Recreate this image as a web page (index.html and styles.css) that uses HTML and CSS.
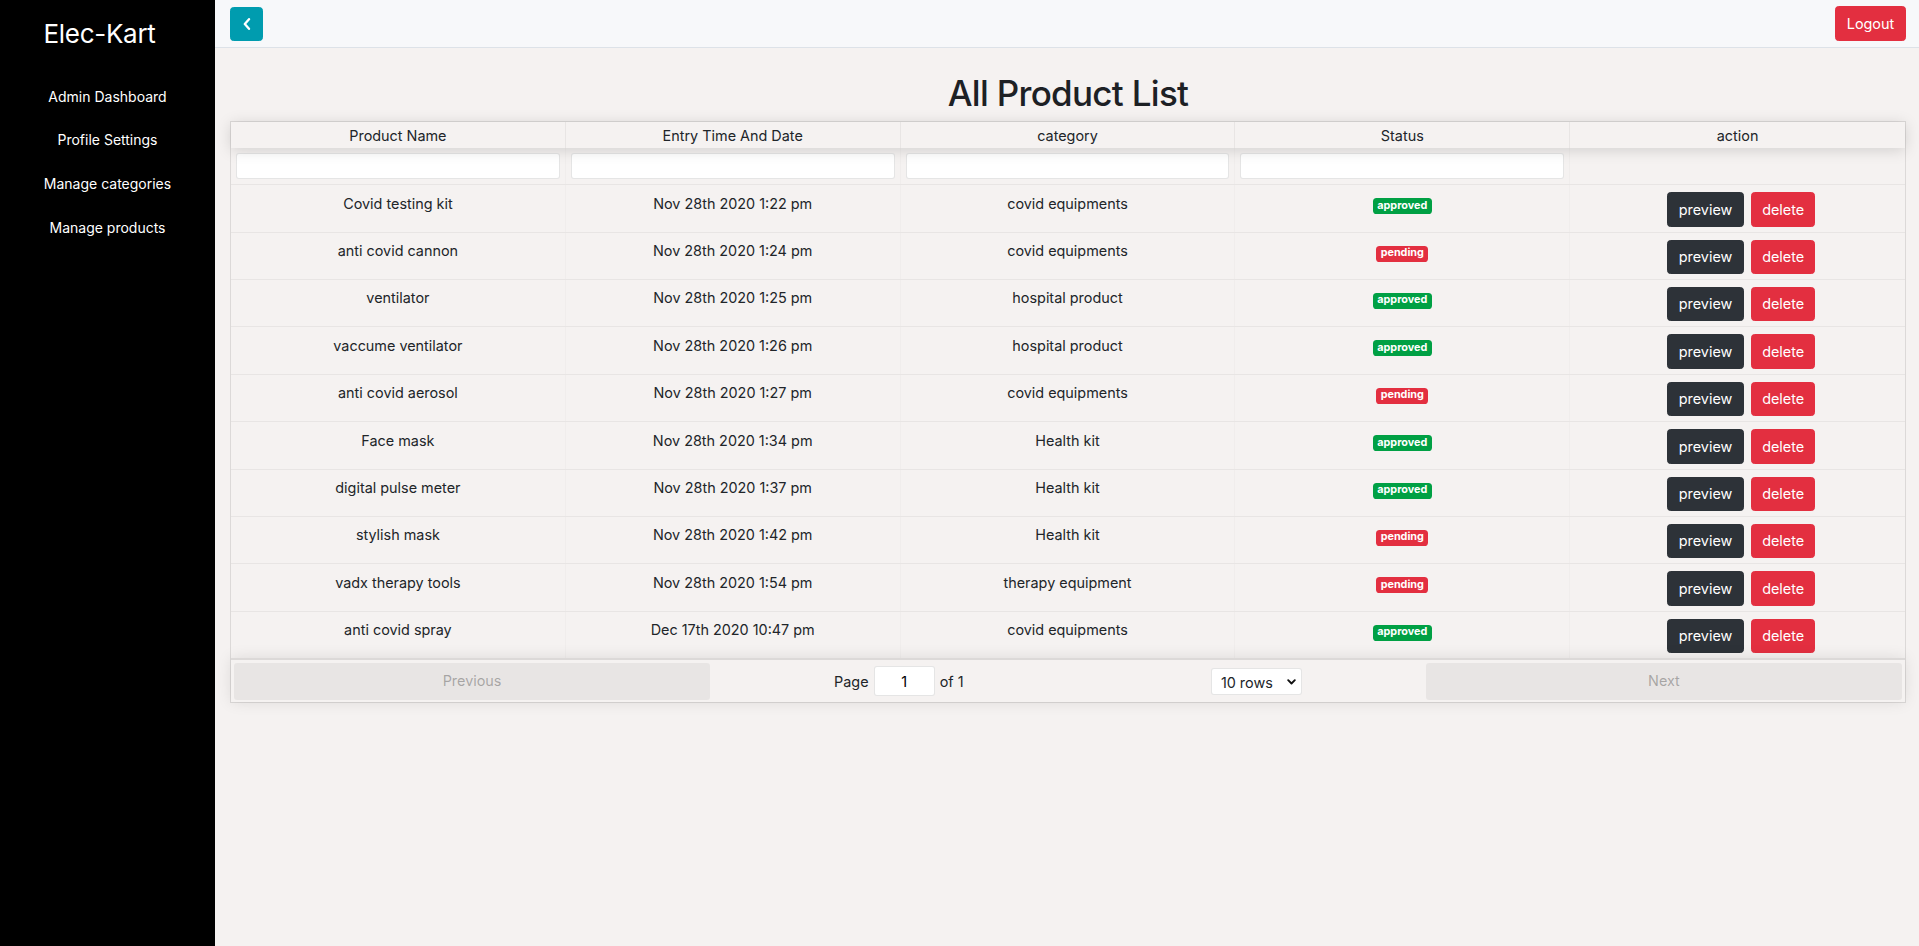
FILE: index.html
```html
<!DOCTYPE html>
<html lang="en">
<head>
<meta charset="utf-8">
<title>Elec-Kart Admin</title>
<link rel="stylesheet" href="styles.css">
</head>
<body>
<div class="app">
  <aside class="sidebar">
    <div class="brand">Elec-Kart</div>
    <nav class="nav">
      <a class="nav-link" href="#">Admin Dashboard</a>
      <a class="nav-link" href="#">Profile Settings</a>
      <a class="nav-link" href="#">Manage categories</a>
      <a class="nav-link" href="#">Manage products</a>
    </nav>
  </aside>
  <main class="main">
    <header class="topbar">
      <button class="btn btn-info btn-back" type="button" aria-label="Back">
        <svg width="8" height="12" viewBox="0 0 8 12"><polyline points="6,1.2 1.8,6 6,10.8" fill="none" stroke="#fff" stroke-width="2.3" stroke-linecap="round" stroke-linejoin="round"/></svg>
      </button>
      <button class="btn btn-danger" type="button">Logout</button>
    </header>
    <section class="content">
      <h1 class="title">All Product List</h1>
      <div class="rtable">
        <div class="thead thead-header">
          <div class="th">Product Name</div>
          <div class="th">Entry Time And Date</div>
          <div class="th">category</div>
          <div class="th">Status</div>
          <div class="th">action</div>
        </div>
        <div class="thead thead-filters">
          <div class="fth"><input class="filter-input" type="text"></div>
          <div class="fth"><input class="filter-input" type="text"></div>
          <div class="fth"><input class="filter-input" type="text"></div>
          <div class="fth"><input class="filter-input" type="text"></div>
          <div class="fth"></div>
        </div>
        <div class="tbody">
          <div class="tr"><div class="td">Covid testing kit</div><div class="td">Nov 28th 2020 1:22 pm</div><div class="td">covid equipments</div><div class="td"><span class="badge badge-success">approved</span></div><div class="td td-action"><button class="btn btn-dark">preview</button><button class="btn btn-danger">delete</button></div></div>
          <div class="tr"><div class="td">anti covid cannon</div><div class="td">Nov 28th 2020 1:24 pm</div><div class="td">covid equipments</div><div class="td"><span class="badge badge-danger">pending</span></div><div class="td td-action"><button class="btn btn-dark">preview</button><button class="btn btn-danger">delete</button></div></div>
          <div class="tr"><div class="td">ventilator</div><div class="td">Nov 28th 2020 1:25 pm</div><div class="td">hospital product</div><div class="td"><span class="badge badge-success">approved</span></div><div class="td td-action"><button class="btn btn-dark">preview</button><button class="btn btn-danger">delete</button></div></div>
          <div class="tr"><div class="td">vaccume ventilator</div><div class="td">Nov 28th 2020 1:26 pm</div><div class="td">hospital product</div><div class="td"><span class="badge badge-success">approved</span></div><div class="td td-action"><button class="btn btn-dark">preview</button><button class="btn btn-danger">delete</button></div></div>
          <div class="tr"><div class="td">anti covid aerosol</div><div class="td">Nov 28th 2020 1:27 pm</div><div class="td">covid equipments</div><div class="td"><span class="badge badge-danger">pending</span></div><div class="td td-action"><button class="btn btn-dark">preview</button><button class="btn btn-danger">delete</button></div></div>
          <div class="tr"><div class="td">Face mask</div><div class="td">Nov 28th 2020 1:34 pm</div><div class="td">Health kit</div><div class="td"><span class="badge badge-success">approved</span></div><div class="td td-action"><button class="btn btn-dark">preview</button><button class="btn btn-danger">delete</button></div></div>
          <div class="tr"><div class="td">digital pulse meter</div><div class="td">Nov 28th 2020 1:37 pm</div><div class="td">Health kit</div><div class="td"><span class="badge badge-success">approved</span></div><div class="td td-action"><button class="btn btn-dark">preview</button><button class="btn btn-danger">delete</button></div></div>
          <div class="tr"><div class="td">stylish mask</div><div class="td">Nov 28th 2020 1:42 pm</div><div class="td">Health kit</div><div class="td"><span class="badge badge-danger">pending</span></div><div class="td td-action"><button class="btn btn-dark">preview</button><button class="btn btn-danger">delete</button></div></div>
          <div class="tr"><div class="td">vadx therapy tools</div><div class="td">Nov 28th 2020 1:54 pm</div><div class="td">therapy equipment</div><div class="td"><span class="badge badge-danger">pending</span></div><div class="td td-action"><button class="btn btn-dark">preview</button><button class="btn btn-danger">delete</button></div></div>
          <div class="tr"><div class="td">anti covid spray</div><div class="td">Dec 17th 2020 10:47 pm</div><div class="td">covid equipments</div><div class="td"><span class="badge badge-success">approved</span></div><div class="td td-action"><button class="btn btn-dark">preview</button><button class="btn btn-danger">delete</button></div></div>
        </div>
        <div class="pagination">
          <div class="pg-side"><button class="pg-btn" disabled>Previous</button></div>
          <div class="pg-center">
            <span class="pg-info">Page <span class="pg-jump"><input class="pg-input" type="text" value="1"></span> of <span class="pg-total">1</span></span>
            <span class="pg-size">
              <select class="pg-select"><option>5 rows</option><option selected>10 rows</option><option>20 rows</option><option>25 rows</option><option>50 rows</option><option>100 rows</option></select>
              <svg class="pg-caret" width="9" height="6" viewBox="0 0 9 6"><polyline points="1.2,1.2 4.5,4.5 7.8,1.2" fill="none" stroke="#111" stroke-width="1.9" stroke-linecap="round" stroke-linejoin="round"/></svg>
            </span>
          </div>
          <div class="pg-side"><button class="pg-btn" disabled>Next</button></div>
        </div>
      </div>
    </section>
  </main>
</div>
</body>
</html>
```
FILE: styles.css
```css
* { box-sizing: border-box; }
html, body { margin: 0; padding: 0; }
body {
  font-family: "Inter", "Noto Sans", sans-serif;
  font-size: 14.4px;
  line-height: 1.5;
  color: #212529;
  background: #f5f2f1;
}
.app { display: flex; min-height: 100vh; }

.sidebar {
  width: 215px;
  flex: 0 0 215px;
  background: #000;
  color: #fff;
  text-align: center;
  padding-top: 17px;
}
.brand {
  font-size: 26px;
  line-height: 33.6px;
  font-weight: 400;
  margin-bottom: 24px;
  padding-right: 16px;
  letter-spacing: -0.3px;
}
.nav { display: flex; flex-direction: column; }
.nav-link {
  display: block;
  color: #fff;
  text-decoration: none;
  font-size: 14px;
  line-height: 21.7px;
  padding: 11px 0;
}

.main { flex: 1; min-width: 0; background: #f5f2f1; }
.topbar {
  height: 48px;
  background: #f7f8fa;
  border-bottom: 1px solid #dde2e8;
  display: flex;
  align-items: center;
  justify-content: space-between;
  padding: 0 13px 0 15px;
}
.btn {
  font-family: inherit;
  font-size: 14.4px;
  line-height: 1.5;
  padding: 5.4px 10.8px;
  border: 1px solid transparent;
  border-radius: 3.6px;
  color: #fff;
  cursor: pointer;
  display: inline-block;
}
.btn-info { background: #009caf; border-color: #009caf; }
.btn-danger { background: #e32f40; border-color: #e32f40; }
.btn-dark { background: #2d3238; border-color: #2d3238; }
.btn-back {
  width: 33px;
  height: 34px;
  padding: 0;
  display: flex;
  align-items: center;
  justify-content: center;
}
.btn-back svg { display: block; }

.content { padding: 0 13px 40px 15px; }
.title {
  margin: 24px 0 6px;
  font-size: 35px;
  line-height: 43.2px;
  font-weight: 500;
  text-align: center;
  color: #1d2125;
  letter-spacing: -0.7px;
}

.rtable {
  border: 1px solid rgba(0,0,0,0.1);
  display: flex;
  flex-direction: column;
}
.thead, .tr {
  display: grid;
  grid-template-columns: repeat(5, 1fr);
}
.thead-header {
  box-shadow: 0 2px 15px 0 rgba(0,0,0,0.15);
  position: relative;
}
.th {
  padding: 4.5px 5px;
  line-height: 17px;
  text-align: center;
  border-right: 1px solid rgba(0,0,0,0.05);
  white-space: nowrap;
}
.th:last-child, .fth:last-child, .td:last-child { border-right: 0; }
.thead-filters { border-bottom: 1px solid rgba(0,0,0,0.05); }
.fth {
  padding: 5px 5px;
  border-right: 1px solid rgba(0,0,0,0.02);
}
.filter-input {
  display: block;
  width: 100%;
  height: 26px;
  border: 1px solid rgba(0,0,0,0.1);
  background: #fff;
  border-radius: 3px;
  padding: 4.5px 6.3px;
  font: inherit;
  outline: none;
}

.tr { border-bottom: 1px solid rgba(0,0,0,0.05); }
.tr:last-child { border-bottom: 0; }
.td {
  padding: 9.5px 5px 5px;
  line-height: 17px;
  text-align: center;
  white-space: nowrap;
  border-right: 1px solid rgba(0,0,0,0.02);
}
.td-action {
  padding: 7px 5px 5px 12px;
  display: flex;
  justify-content: center;
  align-items: flex-start;
  gap: 7px;
}
.td-action .btn { height: 34.4px; line-height: 21.6px; }
.td-action .btn-danger { padding: 5.4px 10px; }

.badge {
  display: inline-block;
  font-size: 10.8px;
  font-weight: 700;
  line-height: 1;
  padding: 2.5px 4.3px 2.7px;
  border-radius: 3.6px;
  color: #fff;
  vertical-align: baseline;
}
.badge-success { background: #00a044; }
.badge-danger { background: #e32f40; }

.pagination {
  display: flex;
  align-items: stretch;
  padding: 2.7px;
  border-top: 2px solid rgba(0,0,0,0.1);
  box-shadow: 0 0 15px 0 rgba(0,0,0,0.1);
  position: relative;
}
.pg-side { flex: 1; text-align: center; }
.pg-btn {
  display: block;
  width: 100%;
  height: 37px;
  border: 0;
  border-radius: 3px;
  padding: 5.4px;
  font: inherit;
  font-size: 14.4px;
  color: rgba(0,0,0,0.6);
  background: rgba(0,0,0,0.1);
  opacity: 0.5;
}
.pg-center {
  flex: 1.5;
  display: flex;
  align-items: center;
  justify-content: space-around;
  text-align: center;
}
.pg-info { margin: 2.7px 9px; white-space: nowrap; line-height: 17px; }
.pg-jump { display: inline-block; }
.pg-input {
  width: 61px;
  height: 30px;
  text-align: center;
  border: 1px solid rgba(0,0,0,0.1);
  background: #fff;
  border-radius: 3px;
  padding: 4.5px 6.3px;
  font: inherit;
  outline: none;
  margin: 0 1px;
}
.pg-size {
  margin: 2.7px 9px;
  position: relative;
  display: inline-block;
}
.pg-select {
  -webkit-appearance: none;
  appearance: none;
  width: 91px;
  height: 27px;
  border: 1px solid rgba(0,0,0,0.1);
  background: #fff;
  border-radius: 3px;
  padding: 3px 6.3px 3px 9px;
  font: inherit;
  color: #212529;
  outline: none;
  display: block;
}
.pg-caret {
  position: absolute;
  right: 6px;
  top: 11px;
  pointer-events: none;
}
```
